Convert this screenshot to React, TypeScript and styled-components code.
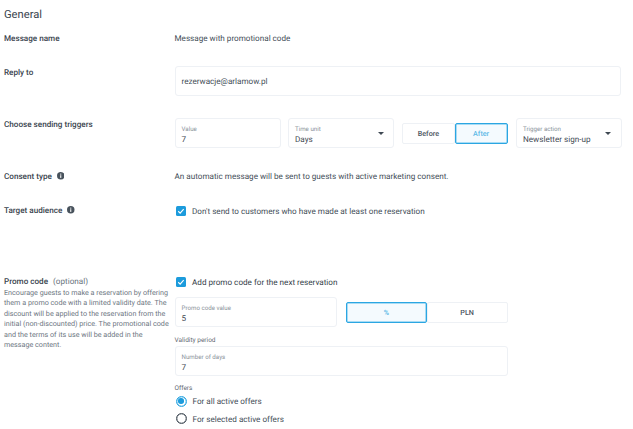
import React from "react";
import styled, { createGlobalStyle } from "styled-components";

const Global = createGlobalStyle`
  html, body { margin: 0; padding: 0; background: #fff; }
  body {
    font-family: Roboto, "Liberation Sans", sans-serif;
    color: #3c4650;
    overflow: hidden;
    text-rendering: geometricPrecision;
  }
`;

const Page = styled.div`
  width: 633px;
  height: 429px;
  padding: 7px 12px 0 4px;
  box-sizing: border-box;
  overflow: hidden;
`;

const Title = styled.h2`
  margin: 0 0 10px;
  font-size: 11.2px;
  line-height: 15px;
  font-weight: 400;
  color: #3a444e;
`;

const Row = styled.div<{ $height: number }>`
  display: grid;
  grid-template-columns: 170.5px 1fr;
  height: ${(p) => p.$height}px;
`;

const Label = styled.div`
  display: flex;
  align-items: center;
  gap: 5px;
  height: 12px;
  font-size: 8.15px;
  font-weight: 500;
  color: #39434d;
`;

const Value = styled.div`
  font-size: 8.15px;
  line-height: 12px;
  color: #434d57;
`;

const Box = styled.div<{ $width?: number }>`
  box-sizing: border-box;
  height: 30px;
  width: ${(p) => (p.$width ? `${p.$width}px` : "auto")};
  flex: ${(p) => (p.$width ? "none" : "1")};
  border: 1px solid #eef1f5;
  border-radius: 3px;
  padding: 6px 6px 0;
  position: relative;
  background: #fff;
`;

const PlainBox = styled(Box)`
  display: flex;
  align-items: center;
  padding: 0 6px;
  font-size: 8.15px;
  color: #434d57;
`;

const Caption = styled.div`
  font-size: 6.2px;
  line-height: 8px;
  color: #8b939b;
`;

const BoxValue = styled.div`
  font-size: 8.15px;
  line-height: 12px;
  color: #3f4953;
`;

const Caret = styled.span`
  position: absolute;
  right: 9.5px;
  top: 12.5px;
  width: 0;
  height: 0;
  border-left: 3px solid transparent;
  border-right: 3px solid transparent;
  border-top: 3px solid #3f4953;
`;

const FieldRow = styled.div<{ $top?: number }>`
  display: flex;
  align-items: center;
  align-self: start;
  margin-top: ${(p) => p.$top ?? 0}px;
`;

const Toggle = styled.div<{ $width: number; $left: number; $right: number }>`
  display: flex;
  width: ${(p) => p.$width}px;
  height: 21px;
  margin: 0 ${(p) => p.$right}px 0 ${(p) => p.$left}px;
  flex: none;
`;

const ToggleOption = styled.div<{ $active?: boolean }>`
  flex: 1;
  box-sizing: border-box;
  display: flex;
  align-items: center;
  justify-content: center;
  font-size: 7.2px;
  font-weight: 500;
  border-radius: 2px;
  color: ${(p) => (p.$active ? "#5ab8e6" : "#4a545e")};
  background: ${(p) => (p.$active ? "#f4fafe" : "#fff")};
  border: 1px solid ${(p) => (p.$active ? "#2ba6e2" : "#eef1f5")};
  box-shadow: ${(p) => (p.$active ? "inset 0 0 0 0.5px #5cbdeb" : "none")};
`;

const CheckRow = styled.div<{ $top?: number; $dark?: boolean }>`
  display: flex;
  align-items: center;
  gap: 6px;
  height: 12px;
  margin-top: ${(p) => p.$top ?? 0}px;
  padding-left: 1.5px;
  font-size: 8.15px;
  color: ${(p) => (p.$dark ? "#343e48" : "#434d57")};
`;

const CheckMark = styled.span`
  width: 10px;
  height: 10px;
  border-radius: 1.5px;
  background: #1c9bdc;
  display: inline-flex;
  align-items: center;
  justify-content: center;
  flex: none;
`;

const Radio = styled.span<{ $checked?: boolean }>`
  box-sizing: border-box;
  width: 11px;
  height: 11px;
  border-radius: 50%;
  border: 1px solid ${(p) => (p.$checked ? "#2ba6e2" : "#46505a")};
  box-shadow: inset 0 0 0 0.3px ${(p) => (p.$checked ? "#2ba6e2" : "#46505a")};
  display: inline-flex;
  align-items: center;
  justify-content: center;
  flex: none;
  &::after {
    content: "";
    display: ${(p) => (p.$checked ? "block" : "none")};
    width: 5.6px;
    height: 5.6px;
    border-radius: 50%;
    background: #1c9bdc;
  }
`;

const RadioRow = styled.div`
  display: flex;
  align-items: center;
  gap: 6px;
  height: 17.5px;
  padding-left: 1px;
  font-size: 8.15px;
  color: #434d57;
`;

const Optional = styled.span`
  font-weight: 400;
  color: #68727c;
`;

const Description = styled.p`
  margin: 0.5px 0 0;
  width: 166px;
  font-size: 7.2px;
  line-height: 10.5px;
  color: #6d767f;
`;

const SmallLabel = styled.div<{ $top: number }>`
  font-size: 6.5px;
  line-height: 9px;
  margin-top: ${(p) => p.$top}px;
  color: #5f6973;
`;

const Narrow = styled.div`
  width: 333px;
  margin-top: 1.5px;
  display: flex;
`;

const Info = () => (
  <svg width="7.5" height="7.5" viewBox="0 0 14 14">
    <circle cx="7" cy="7" r="7" fill="#48525c" />
    <rect x="6" y="6" width="2" height="5" fill="#fff" />
    <rect x="6" y="3" width="2" height="2" fill="#fff" />
  </svg>
);

const Check = () => (
  <CheckMark>
    <svg width="8" height="8" viewBox="0 0 16 16">
      <path d="M2.5 8.5l3.8 3.8 7-8" fill="none" stroke="#fff" strokeWidth="2.2" />
    </svg>
  </CheckMark>
);

export default function App() {
  return (
    <Page>
      <Global />
      <Title>General</Title>
      <Row $height={34}>
        <Label>Message name</Label>
        <Value>Message with promotional code</Value>
      </Row>
      <Row $height={52}>
        <Label>Reply to</Label>
        <FieldRow>
          <PlainBox $width={446.5}>rezerwacje@arlamow.pl</PlainBox>
        </FieldRow>
      </Row>
      <Row $height={52}>
        <Label>Choose sending triggers</Label>
        <FieldRow>
          <Box $width={106}>
            <Caption>Value</Caption>
            <BoxValue>7</BoxValue>
          </Box>
          <Box $width={106} style={{ marginLeft: 7.5 }}>
            <Caption>Time unit</Caption>
            <BoxValue>Days</BoxValue>
            <Caret />
          </Box>
          <Toggle $width={105.5} $left={8} $right={8.5}>
            <ToggleOption>Before</ToggleOption>
            <ToggleOption $active>After</ToggleOption>
          </Toggle>
          <Box $width={105.5}>
            <Caption>Trigger action</Caption>
            <BoxValue>Newsletter sign-up</BoxValue>
            <Caret />
          </Box>
        </FieldRow>
      </Row>
      <Row $height={34}>
        <Label>
          Consent type <Info />
        </Label>
        <Value>An automatic message will be sent to guests with active marketing consent.</Value>
      </Row>
      <Row $height={71}>
        <Label>
          Target audience <Info />
        </Label>
        <CheckRow $top={0.5}>
          <Check />
          Don't send to customers who have made at least one reservation
        </CheckRow>
      </Row>
      <Row $height={154}>
        <div>
          <Label>
            <span>Promo code</span>
            <Optional>(optional)</Optional>
          </Label>
          <Description>
            Encourage guests to make a reservation by offering them a promo code with a limited validity date. The
            discount will be applied to the reservation from the initial (non-discounted) price. The promotional code
            and the terms of its use will be added in the message content.
          </Description>
        </div>
        <div>
          <CheckRow $dark $top={1}>
            <Check />
            Add promo code for the next reservation
          </CheckRow>
          <FieldRow $top={9}>
            <Box $width={162}>
              <Caption>Promo code value</Caption>
              <BoxValue>5</BoxValue>
            </Box>
            <Toggle $width={161.5} $left={9.5} $right={0}>
              <ToggleOption $active>%</ToggleOption>
              <ToggleOption>PLN</ToggleOption>
            </Toggle>
          </FieldRow>
          <SmallLabel $top={8.5}>Validity period</SmallLabel>
          <Narrow>
            <Box>
              <Caption>Number of days</Caption>
              <BoxValue>7</BoxValue>
            </Box>
          </Narrow>
          <SmallLabel $top={7.5}>Offers</SmallLabel>
          <RadioRow>
            <Radio $checked />
            For all active offers
          </RadioRow>
          <RadioRow>
            <Radio />
            For selected active offers
          </RadioRow>
        </div>
      </Row>
    </Page>
  );
}
